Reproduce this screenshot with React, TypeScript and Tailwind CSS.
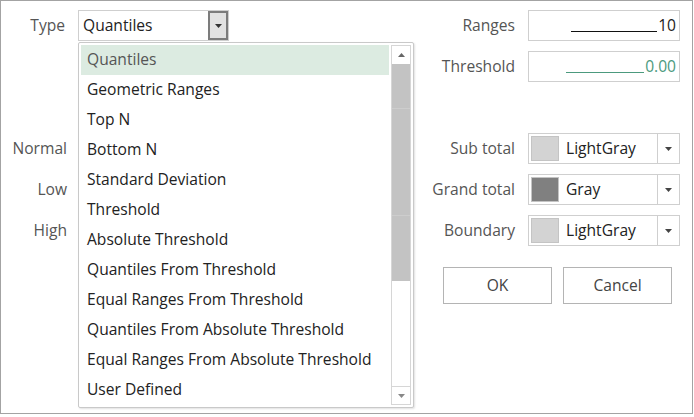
import React from 'react';

const typeOptions = [
  'Quantiles',
  'Geometric Ranges',
  'Top N',
  'Bottom N',
  'Standard Deviation',
  'Threshold',
  'Absolute Threshold',
  'Quantiles From Threshold',
  'Equal Ranges From Threshold',
  'Quantiles From Absolute Threshold',
  'Equal Ranges From Absolute Threshold',
  'User Defined',
];

function Caret({ className = '' }: { className?: string }) {
  return (
    <svg width="7" height="4" viewBox="0 0 7 4" className={className}>
      <path d="M0 0h7L3.5 4z" fill="currentColor" />
    </svg>
  );
}

function ColorCombo({ name, swatch }: { name: string; swatch: string }) {
  return (
    <div className="flex h-[31px] w-[152px] items-stretch border border-[#cfcfcf] bg-white">
      <div className="flex items-center pl-[2px]">
        <div className={`h-[25px] w-[28px] border border-[#c4c4c4] ${swatch}`} />
      </div>
      <div className="flex flex-1 items-center pl-[7px] text-[#222]">{name}</div>
      <div className="flex w-[22px] items-center justify-center border-l border-[#cfcfcf] text-[#444]">
        <Caret />
      </div>
    </div>
  );
}

function FieldRow({ label, children }: { label: string; children: React.ReactNode }) {
  return (
    <div className="flex h-[31px] items-center">
      <div className="w-[96px] whitespace-nowrap pr-[1px] text-right text-[#555]">{label}</div>
      <div className="ml-[12px]">{children}</div>
    </div>
  );
}

export default function App() {
  return (
    <div
      className="h-[417px] w-[694px] bg-white text-[15.6px]"
      style={{ fontFamily: '"Open Sans", "Noto Sans", sans-serif' }}
    >
      <div className="relative flex h-[414px] w-[693px] border border-[#a3a3a3]">
        {/* left column: type picker and band labels */}
        <div className="flex w-[419px] flex-col pt-[9px]">
          <div className="flex h-[31px] items-center">
            <div className="w-[65px] pr-[1px] text-right text-[#555]">Type</div>
            <div className="ml-[12px] flex h-[31px] w-[151px] items-stretch border border-[#cfcfcf] bg-white">
              <div className="flex flex-1 items-center pl-[4px] text-[#222]">Quantiles</div>
              <div className="flex w-[20px] items-center justify-center border-2 border-[#7c7c7c] bg-[#e2e2e2] text-[#333]">
                <Caret />
              </div>
            </div>
          </div>
          <div className="mt-[92px] flex flex-col gap-[10px] text-[#555]">
            {['Normal', 'Low', 'High'].map((l) => (
              <div key={l} className="flex h-[31px] w-[66px] items-center justify-end">
                {l}
              </div>
            ))}
          </div>
        </div>

        {/* right column: ranges, colours, buttons */}
        <div className="flex flex-1 flex-col pt-[9px]">
          <div className="flex flex-col gap-[10px]">
            <FieldRow label="Ranges">
              <div className="flex h-[31px] w-[152px] items-center justify-end border border-[#cfcfcf] pr-[3px] text-[#222]">
                <span className="mr-[1px] mt-[12px] inline-block h-0 w-[86px] border-b border-[#111]" />
                <span>10</span>
              </div>
            </FieldRow>
            <FieldRow label="Threshold">
              <div className="flex h-[31px] w-[152px] items-center justify-end border border-[#cfcfcf] pr-[3px] text-[#4c9a7e]">
                <span className="mr-[1px] mt-[12px] inline-block h-0 w-[78px] border-b border-[#4c9a7e]" />
                <span>0.00</span>
              </div>
            </FieldRow>
          </div>
          <div className="mt-[51px] flex flex-col gap-[10px]">
            <FieldRow label="Sub total">
              <ColorCombo name="LightGray" swatch="bg-[#d3d3d3]" />
            </FieldRow>
            <FieldRow label="Grand total">
              <ColorCombo name="Gray" swatch="bg-[#808080]" />
            </FieldRow>
            <FieldRow label="Boundary">
              <ColorCombo name="LightGray" swatch="bg-[#d3d3d3]" />
            </FieldRow>
          </div>
          <div className="ml-[23px] mt-[21px] flex gap-[11px] text-[#444]">
            <button className="h-[37px] w-[109px] border border-[#b4b4b4] bg-white">OK</button>
            <button className="h-[37px] w-[109px] border border-[#b4b4b4] bg-white">Cancel</button>
          </div>
        </div>

        {/* open dropdown list */}
        <div className="absolute left-[77px] top-[41px] flex h-[366px] w-[336px] rounded-[2px] border border-[#c9c9c9] bg-white p-[2px] shadow-[1px_1px_2px_rgba(0,0,0,0.12)]">
          <ul className="flex flex-1 flex-col">
            {typeOptions.map((o, i) => (
              <li
                key={o}
                className={`flex h-[30px] items-center whitespace-nowrap pl-[6px] ${
                  i === 0 ? 'bg-[#dcebe1] text-[#555]' : 'text-[#222]'
                }`}
              >
                {o}
              </li>
            ))}
          </ul>
          <div className="ml-[2px] flex w-[20px] flex-col border border-[#d6d6d6] bg-white">
            <div className="flex h-[18px] items-center justify-center text-[#666]">
              <Caret className="rotate-180" />
            </div>
            <div className="flex flex-1 flex-col">
              <div className="flex h-[217px] flex-col bg-[#c3c3c3]">
                <div className="h-[44px]" />
                <div className="h-[108px] border-y border-[#cdcdcd]" />
              </div>
            </div>
            <div className="flex h-[18px] items-center justify-center border-t border-[#d6d6d6] text-[#888]">
              <Caret />
            </div>
          </div>
        </div>
      </div>
    </div>
  );
}
